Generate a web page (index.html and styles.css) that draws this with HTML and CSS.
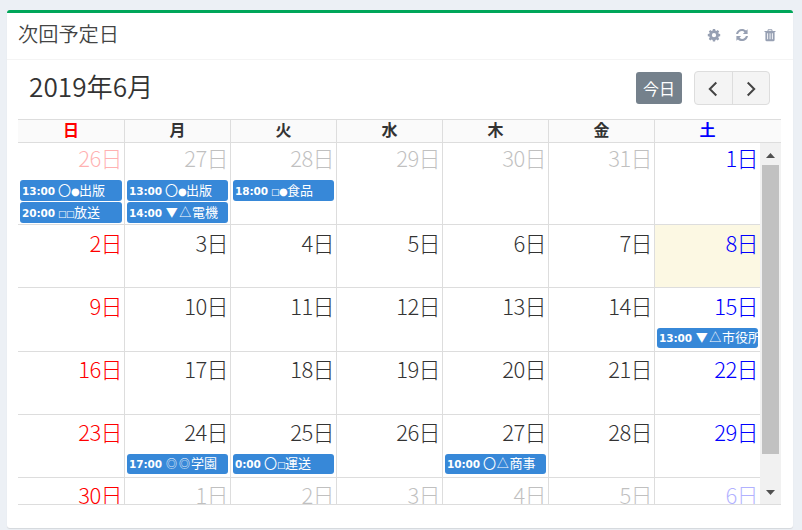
FILE: index.html
```html
<!DOCTYPE html>
<html lang="ja">
<head>
<meta charset="utf-8">
<title>次回予定日</title>
<link rel="stylesheet" href="styles.css">
</head>
<body>
<section class="box">
  <header class="box-header">
    <h3 class="box-title">次回予定日</h3>
    <div class="tools">
      <svg class="tool" viewBox="0 0 14 14"><path fill-rule="evenodd" d="M5.900 1h2.200l.3 1.500 1 .4 1.300-.9 1.500 1.500-.9 1.300.4 1 1.500.3v2.200l-1.500.3-.4 1 .9 1.300-1.500 1.500-1.300-.9-1 .4L8.100 13.400H5.900l-.3-1.500-1-.4-1.300.9-1.500-1.500.9-1.300-.4-1L.8 8.300V6.100l1.500-.3.400-1-.9-1.300L3.300 2l1.300.9 1-.4zM7 5.100a2.100 2.100 0 1 0 0 4.200 2.100 2.100 0 0 0 0-4.200z"/></svg>
      <svg class="tool" viewBox="0 0 14 14"><path d="M1 6C1.500 3 4 1 7 1c1.600 0 3 .6 4.100 1.600L12.600 1.200V6H7.900l1.600-1.700A3.700 3.700 0 0 0 7 3.100C5 3.100 3.700 4.200 3.100 6zM13 8c-.5 3-3 5-6 5-1.600 0-3-.6-4.100-1.600L1.400 12.800V8h4.700l-1.600 1.700A3.700 3.700 0 0 0 7 10.900c2 0 3.300-1.100 3.900-2.900z"/></svg>
      <svg class="tool" viewBox="0 0 14 14"><path fill-rule="evenodd" d="M4.300 3 5 1.200h4L9.700 3H12.500v1H11.600v8c0 .7-.5 1.200-1.100 1.200h-7c-.6 0-1.100-.5-1.100-1.200V4H1.500V3zM5.400 3h3.200l-.3-.8H5.700zM4.200 5.200v6h.9v-6zm2.400 0v6h.9v-6zm2.300 0v6h.9v-6z"/></svg>
    </div>
  </header>
  <div class="calendar">
    <div class="toolbar">
      <h2 class="month">2019年6月</h2>
      <button class="today-btn">今日</button>
      <div class="nav">
        <button class="nav-btn"><svg width="10" height="16" viewBox="0 0 10 16"><path d="M8.300 1.500 1.800 8l6.500 6.500"/></svg></button>
        <button class="nav-btn"><svg width="10" height="16" viewBox="0 0 10 16"><path d="M1.700 1.500 8.200 8l-6.500 6.500"/></svg></button>
      </div>
    </div>
    <div class="weekdays">
      <div class="sun">日</div><div>月</div><div>火</div><div>水</div><div>木</div><div>金</div><div class="sat">土</div>
    </div>
    <div class="scroller">
      <div class="weeks">
        <div class="week first">
          <div class="day sun other"><span class="num">26日</span>
            <div class="event"><b>13:00</b><i>〇</i><i class="half dot">●</i>出版</div>
            <div class="event"><b>20:00</b><i class="half">□</i><i class="half">□</i>放送</div></div>
          <div class="day other"><span class="num">27日</span>
            <div class="event"><b>13:00</b><i>〇</i><i class="half dot">●</i>出版</div>
            <div class="event"><b>14:00</b><i class="tri">▼</i><i class="tri">△</i>電機</div></div>
          <div class="day other"><span class="num">28日</span>
            <div class="event"><b>18:00</b><i class="half">□</i><i class="half dot">●</i>食品</div></div>
          <div class="day other"><span class="num">29日</span></div>
          <div class="day other"><span class="num">30日</span></div>
          <div class="day other"><span class="num">31日</span></div>
          <div class="day sat"><span class="num">1日</span></div>
        </div>
        <div class="week second">
          <div class="day sun"><span class="num">2日</span></div>
          <div class="day"><span class="num">3日</span></div>
          <div class="day"><span class="num">4日</span></div>
          <div class="day"><span class="num">5日</span></div>
          <div class="day"><span class="num">6日</span></div>
          <div class="day"><span class="num">7日</span></div>
          <div class="day sat today"><span class="num">8日</span></div>
        </div>
        <div class="week third">
          <div class="day sun"><span class="num">9日</span></div>
          <div class="day"><span class="num">10日</span></div>
          <div class="day"><span class="num">11日</span></div>
          <div class="day"><span class="num">12日</span></div>
          <div class="day"><span class="num">13日</span></div>
          <div class="day"><span class="num">14日</span></div>
          <div class="day sat"><span class="num">15日</span>
            <div class="event"><b>13:00</b><i class="tri">▼</i><i class="tri">△</i>市役所</div></div>
        </div>
        <div class="week">
          <div class="day sun"><span class="num">16日</span></div>
          <div class="day"><span class="num">17日</span></div>
          <div class="day"><span class="num">18日</span></div>
          <div class="day"><span class="num">19日</span></div>
          <div class="day"><span class="num">20日</span></div>
          <div class="day"><span class="num">21日</span></div>
          <div class="day sat"><span class="num">22日</span></div>
        </div>
        <div class="week">
          <div class="day sun"><span class="num">23日</span></div>
          <div class="day"><span class="num">24日</span>
            <div class="event"><b>17:00</b><i class="ring">◎</i><i class="ring">◎</i>学園</div></div>
          <div class="day"><span class="num">25日</span>
            <div class="event"><b class="short">0:00</b><i>〇</i><i class="half">□</i>運送</div></div>
          <div class="day"><span class="num">26日</span></div>
          <div class="day"><span class="num">27日</span>
            <div class="event"><b>10:00</b><i>〇</i><i class="tri">△</i>商事</div></div>
          <div class="day"><span class="num">28日</span></div>
          <div class="day sat"><span class="num">29日</span></div>
        </div>
        <div class="week">
          <div class="day sun"><span class="num">30日</span></div>
          <div class="day other"><span class="num">1日</span></div>
          <div class="day other"><span class="num">2日</span></div>
          <div class="day other"><span class="num">3日</span></div>
          <div class="day other"><span class="num">4日</span></div>
          <div class="day other"><span class="num">5日</span></div>
          <div class="day sat other"><span class="num">6日</span></div>
        </div>
      </div>
      <div class="scrollbar">
        <svg class="arrow" viewBox="0 0 9 5"><path d="M0 5 4.500 0 9 5z"/></svg>
        <div class="thumb"></div>
        <svg class="arrow" viewBox="0 0 9 5"><path d="M0 0 4.500 5 9 0z"/></svg>
      </div>
    </div>
  </div>
</section>
</body>
</html>
```
FILE: styles.css
```css
* { box-sizing: border-box; }
body {
  margin: 0;
  padding: 10px 9px 0 7px;
  height: 530px;
  overflow: hidden;
  background: #ecf0f5;
  color: #333;
  font-family: "Noto Sans CJK JP", sans-serif;
}
h2, h3 { margin: 0; }
.box {
  height: 518px;
  background: #fff;
  border-top: 3px solid #00a65a;
  border-radius: 3px;
  box-shadow: 0 1px 1px rgba(0, 0, 0, .1);
}
.box-header {
  display: flex;
  justify-content: space-between;
  align-items: center;
  height: 47px;
  padding: 0 16px 2px 11px;
  border-bottom: 1px solid #f4f4f4;
}
.box-title { padding-bottom: 2px; font-size: 20.2px; line-height: 24px; font-weight: 350; color: #444; }
.tools { display: flex; gap: 14px; }
.tool { width: 14px; height: 14px; fill: #97a0b3; }
.calendar { padding: 0 12px 0 11px; }
.toolbar { display: flex; align-items: center; height: 59px; padding: 0 11px 3px; }
.month { flex: 1; font-size: 26.2px; line-height: 30px; font-weight: 350; padding-bottom: 5px; }
.today-btn {
  width: 46px;
  height: 32px;
  margin-right: 12px;
  padding: 0;
  border: 0;
  border-radius: 3px;
  background: #75818c;
  color: #fff;
  font: 400 16px/30px "Noto Sans CJK JP", sans-serif;
}
.nav { display: flex; width: 76px; height: 34px; border: 1px solid #ddd; border-radius: 4px; background: #f4f4f4; overflow: hidden; }
.nav-btn { flex: 1; display: flex; justify-content: center; align-items: center; padding: 2px 0 0; border: 0; background: none; }
.nav-btn + .nav-btn { border-left: 1px solid #ddd; }
.nav-btn path { fill: none; stroke: #444; stroke-width: 2; }
.weekdays {
  display: grid;
  grid-template-columns: repeat(7, 106px);
  height: 24px;
  border: solid #ddd;
  border-width: 1px 0;
  background: #fafafa;
  font-size: 16px;
  font-weight: 700;
  line-height: 18px;
  text-align: center;
}
.weekdays div + div { border-left: 1px solid #ddd; }
.sun { color: #f00; }
.sat { color: #00f; }
.scroller { display: flex; height: 362px; overflow: hidden; border-bottom: 1px solid #ddd; }
.weeks { width: 742px; flex: none; }
.week { display: grid; grid-template-columns: repeat(7, 106px); height: 63px; border-bottom: 1px solid #ddd; }
.week.first { height: 82px; }
.week.third { height: 64px; }
.day { padding: 0 2px; }
.day + .day { border-left: 1px solid #ddd; }
.today { background: #fcf8e3; }
.num { display: block; height: 39px; font-size: 22px; line-height: 33px; font-weight: 200; letter-spacing: -.6px; text-align: right; }
.first .num { height: 37px; line-height: 31px; margin-top: -1px; margin-bottom: 1px; }
.second .num, .third .num { height: 40px; line-height: 35px; }
.other .num { opacity: .3; }
.event {
  height: 21px;
  margin-bottom: 1px;
  padding-left: 2px;
  border-radius: 3px;
  overflow: hidden;
  background: #3788d8;
  color: #fff;
  font-size: 13px;
  line-height: 19px;
  white-space: nowrap;
}
.week:not(.first) .event { height: 20px; line-height: 17px; }
.event b { display: inline-block; width: 36px; font-family: "DejaVu Sans", sans-serif; font-size: 10.5px; letter-spacing: -.1px; }
.event .short { width: 29px; }
.event i { display: inline-block; width: 13px; font-style: normal; text-align: center; }
.event .half { width: 8px; font: 9px "DejaVu Sans", sans-serif; }
.event .dot { font-size: 10px; }
.event .ring { font-size: 11px; }
.event .tri { font-size: 12px; width: 13.5px; }
.scrollbar { flex: 1; display: flex; flex-direction: column; align-items: center; padding: 10px 0 9px; background: #f1f1f1; }
.arrow { width: 9px; height: 5px; fill: #505050; }
.thumb { width: 17px; height: 289px; margin: 7px 0 auto; background: #c1c1c1; }
```
